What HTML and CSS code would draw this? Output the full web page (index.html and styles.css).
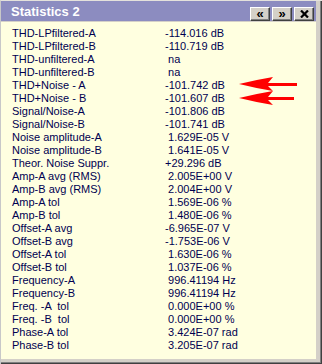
FILE: index.html
```html
<!DOCTYPE html>
<html lang="en">

<head>
    <meta charset="UTF-8">
    <title>Statistics 2</title>
    <meta name="viewport" content="width=device-width, initial-scale=1.0">
    <link rel="stylesheet" href="styles.css">
</head>

<body>

    <div class="window">
        <div class="titlebar">
            <span class="title">Statistics 2</span>
            <div class="tools">
                <button class="tool">&laquo;</button>
                <button class="tool">&raquo;</button>
                <button class="tool">
                    <svg width="9" height="8" viewBox="0 0 9 8">
                        <path d="M1 0.5 L8 7.5 M8 0.5 L1 7.5" stroke="#000" stroke-width="2.2" />
                    </svg>
                </button>
            </div>
        </div>

        <div class="panel">
            <div class="stats">
                <span>THD-LPfiltered-A</span><span>-114.016 dB</span>
                <span>THD-LPfiltered-B</span><span>-110.719 dB</span>
                <span>THD-unfiltered-A</span><span> na</span>
                <span>THD-unfiltered-B</span><span> na</span>
                <span>THD+Noise - A</span><span>-101.742 dB</span>
                <span>THD+Noise - B</span><span>-101.607 dB</span>
                <span>Signal/Noise-A</span><span>-101.806 dB</span>
                <span>Signal/Noise-B</span><span>-101.741 dB</span>
                <span>Noise amplitude-A</span><span> 1.629E-05 V</span>
                <span>Noise amplitude-B</span><span> 1.641E-05 V</span>
                <span>Theor. Noise Suppr.</span><span>+29.296 dB</span>
                <span>Amp-A avg (RMS)</span><span> 2.005E+00 V</span>
                <span>Amp-B avg (RMS)</span><span> 2.004E+00 V</span>
                <span>Amp-A tol</span><span> 1.569E-06 %</span>
                <span>Amp-B tol</span><span> 1.480E-06 %</span>
                <span>Offset-A avg</span><span>-6.965E-07 V</span>
                <span>Offset-B avg</span><span>-1.753E-06 V</span>
                <span>Offset-A tol</span><span> 1.630E-06 %</span>
                <span>Offset-B tol</span><span> 1.037E-06 %</span>
                <span>Frequency-A</span><span> 996.41194 Hz</span>
                <span>Frequency-B</span><span> 996.41194 Hz</span>
                <span>Freq. -A  tol</span><span> 0.000E+00 %</span>
                <span>Freq. -B  tol</span><span> 0.000E+00 %</span>
                <span>Phase-A tol</span><span> 3.424E-07 rad</span>
                <span>Phase-B tol</span><span> 3.205E-07 rad</span>
            </div>

            <!-- the two red markers pointing at THD+Noise -->
            <svg class="arrows" width="66" height="34" viewBox="0 0 66 34">
                <path d="M4 9 Q20 5 38 2 L33 8 L62 8 L62 11 L33 11 L38 16 Q20 13 4 9 Z" fill="#ff0000" />
                <path d="M4 23 Q20 19 38 16 L33 22 L59 22 L59 25 L33 25 L38 30 Q20 27 4 23 Z" fill="#ff0000" />
            </svg>
        </div>
    </div>

</body>

</html>
```

FILE: styles.css
```css
body {
    margin: 0;
    background: #d4d0c8;
    font-family: "Liberation Sans", Arial, sans-serif;
}

.window {
    width: 322px;
    height: 364px;
    box-sizing: border-box;
    display: flex;
    flex-direction: column;
    background: #d4d0c8;
    border-top: 1px solid #e4e2dc;
    border-left: 1px solid #c8c8c8;
    padding-right: 6px;
    padding-bottom: 5px;
    box-shadow: inset -1px -1px #404040, inset -2px -2px #808080;
}

.titlebar {
    height: 20px;
    display: flex;
    align-items: flex-start;
    justify-content: space-between;
    background: #8c8cc0;
}

.title {
    padding: 3px 0 0 10px;
    color: #fff;
    font-weight: bold;
    font-size: 13px;
    line-height: 16px;
}

.tools {
    display: flex;
    gap: 2px;
    padding: 6px 2px 0 0;
}

.tool {
    width: 20px;
    height: 14px;
    padding: 0;
    display: flex;
    align-items: center;
    justify-content: center;
    background: #d4d0c8;
    border: 1px solid;
    border-color: #fff #404040 #404040 #fff;
    box-shadow: inset -1px -1px #808080;
    font-family: "Liberation Sans", Arial, sans-serif;
    font-weight: bold;
    font-size: 13px;
    line-height: 12px;
    color: #000;
}

.panel {
    position: relative;
    flex: 1;
    margin-top: 1px;
    background: #ffffe0;
    padding: 5px 0 0 11px;
}

.stats {
    display: grid;
    grid-template-columns: 153px auto;
    grid-auto-rows: 13px;
    font-size: 11px;
    line-height: 13px;
    color: #000050;
    white-space: pre;
}

.arrows {
    position: absolute;
    left: 234px;
    top: 53px;
}
```
